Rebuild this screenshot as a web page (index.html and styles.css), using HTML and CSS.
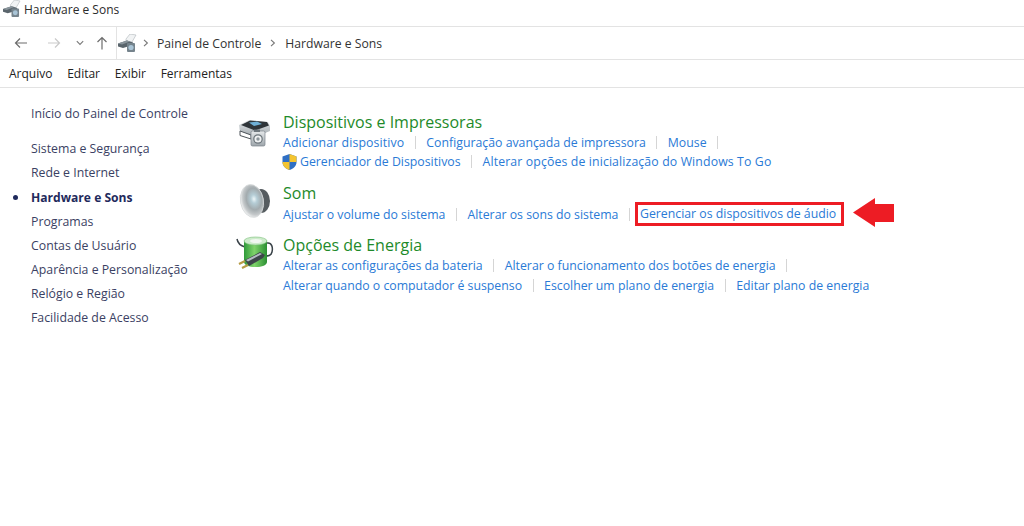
FILE: index.html
```html
<!DOCTYPE html>
<html lang="pt-BR">
<head>
<meta charset="utf-8">
<title>Hardware e Sons</title>
<link rel="stylesheet" href="styles.css">
</head>
<body>
<svg class="defs" width="0" height="0">
  <defs>
    <symbol id="hw" viewBox="0 0 20 18">
      <path d="M9 5 13 0 19 1 15 8 9 8Z" fill="#f1f3f4" stroke="#b9bfc3" stroke-width=".7"/>
      <path d="M1 9.500 10 6.500 16 8.500V11L6 14 1 12.500Z" fill="#5a656c"/>
      <path d="M1 9.500 10 6.500 13 7.500 5 10.500Z" fill="#8a959c"/>
      <rect x="10" y="9" width="8" height="9" rx="1" fill="#75838c"/>
      <circle cx="14" cy="13.500" r="2.600" fill="#a9c4d6"/>
    </symbol>
    <radialGradient id="cone" cx="0.6" cy="0.45" r="0.6">
      <stop offset="0" stop-color="#eef7f9"/>
      <stop offset="0.22" stop-color="#b5cdd6"/>
      <stop offset="0.55" stop-color="#a3abae"/>
      <stop offset="0.8" stop-color="#c4c8ca"/>
      <stop offset="1" stop-color="#f4f5f5"/>
    </radialGradient>
    <linearGradient id="bat" x1="0" x2="1">
      <stop offset="0" stop-color="#2f9a3a"/>
      <stop offset="0.45" stop-color="#7fd36a"/>
      <stop offset="1" stop-color="#2b8f33"/>
    </linearGradient>
    <linearGradient id="silver" x1="0" x2="0" y1="0" y2="1">
      <stop offset="0" stop-color="#e6e9eb"/>
      <stop offset="1" stop-color="#9ea6ab"/>
    </linearGradient>
  </defs>
</svg>
<header class="titlebar">
  <svg class="tb-icon"><use href="#hw"/></svg>
  <span>Hardware e Sons</span>
</header>
<nav class="addressrow">
  <div class="navbtns">
    <svg class="nav-back" width="14" height="12" viewBox="0 0 14 12"><path d="M13 6H1.500M6 1.500 1.500 6 6 10.500" fill="none" stroke="#6d6d6d" stroke-width="1.200"/></svg>
    <svg class="nav-fwd" width="14" height="12" viewBox="0 0 14 12"><path d="M1 6h11.500M8 1.500 12.500 6 8 10.500" fill="none" stroke="#c9c9c9" stroke-width="1.200"/></svg>
    <svg class="nav-down" width="8" height="6" viewBox="0 0 8 6"><path d="M.8 1.200 4 4.400 7.200 1.200" fill="none" stroke="#7a7a7a" stroke-width="1.100"/></svg>
    <svg class="nav-up" width="12" height="14" viewBox="0 0 12 14"><path d="M6 13.500V1.500M1.500 6 6 1.500 10.500 6" fill="none" stroke="#6d6d6d" stroke-width="1.200"/></svg>
  </div>
  <div class="addressbar">
    <svg class="ab-icon"><use href="#hw"/></svg>
    <svg class="chev" width="6" height="8" viewBox="0 0 6 8"><path d="M1 .8 4.400 4 1 7.200" fill="none" stroke="#777" stroke-width="1.100"/></svg>
    <span class="crumb">Painel de Controle</span>
    <svg class="chev chev2" width="6" height="8" viewBox="0 0 6 8"><path d="M1 .8 4.400 4 1 7.200" fill="none" stroke="#777" stroke-width="1.100"/></svg>
    <span class="crumb">Hardware e Sons</span>
  </div>
</nav>
<div class="menubar">
  <span>Arquivo</span><span>Editar</span><span>Exibir</span><span>Ferramentas</span>
</div>
<div class="content">
  <aside class="sidebar">
    <a class="side-home">Início do Painel de Controle</a>
    <a>Sistema e Segurança</a>
    <a>Rede e Internet</a>
    <a class="current">Hardware e Sons</a>
    <a>Programas</a>
    <a>Contas de Usuário</a>
    <a>Aparência e Personalização</a>
    <a>Relógio e Região</a>
    <a>Facilidade de Acesso</a>
  </aside>
  <main class="main">
    <section class="group g-devices">
      <svg class="gicon" width="34" height="34" viewBox="0 0 34 34">
        <path d="M2 8 12 3 31 5 33 9 33 14 18 20 3 15Z" fill="url(#silver)"/>
        <path d="M4 8 13 3.500 30 5 32 8.500 18 13.500Z" fill="#2f3539"/>
        <path d="M12 5.500 20 4.500 25 7 17 9Z" fill="#6fb0d6"/>
        <path d="M3 14 14 18V22L3 18.500Z" fill="#ffffff" stroke="#4c5358" stroke-width="1"/>
        <rect x="14" y="14" width="14" height="15" rx="1.500" fill="url(#silver)" stroke="#7a8389" stroke-width=".7"/>
        <rect x="17" y="12.500" width="6" height="2.500" fill="#6e777d"/>
        <circle cx="21" cy="22" r="4.200" fill="#f0f2f3" stroke="#6b747a" stroke-width="1.200"/>
        <circle cx="21" cy="22" r="1.700" fill="#8b959b"/>
      </svg>
      <div class="gbody">
        <h2>Dispositivos e Impressoras</h2>
        <div class="links"><a class="loose">Adicionar dispositivo</a><i></i><a>Configuração avançada de impressora</a><i></i><a>Mouse</a><i></i></div>
        <div class="links">
          <svg class="shield" width="17" height="18" viewBox="0 0 17 18"><path d="M8.500 1 15.500 3.500V9c0 4-3 6.700-7 8-4-1.300-7-4-7-8V3.500Z" fill="#2f6fc4"/><path d="M8.500 1 15.500 3.500V9H8.500Z" fill="#f4c430"/><path d="M8.500 9H1.500c0 4 3 6.700 7 8Z" fill="#f4c430"/></svg>
          <a>Gerenciador de Dispositivos</a><i></i><a class="loose">Alterar opções de inicialização do Windows To Go</a>
        </div>
      </div>
    </section>
    <section class="group g-sound">
      <svg class="gicon" width="34" height="36" viewBox="0 0 34 36">
        <ellipse cx="23" cy="17" rx="9" ry="12" fill="#565c60"/>
        <ellipse cx="14" cy="17" rx="11.500" ry="16.500" transform="rotate(-10 14 17)" fill="url(#cone)" stroke="#d5d8d9" stroke-width=".8"/>
      </svg>
      <div class="gbody">
        <h2>Som</h2>
        <div class="links"><a>Ajustar o volume do sistema</a><i></i><a>Alterar os sons do sistema</a><i></i><a class="marked">Gerenciar os dispositivos de áudio</a>
          <svg class="arrow" width="41" height="29" viewBox="0 0 41 29"><path d="M0 14.500 22 0V6H41V24H22V29Z" fill="#ed1c24"/></svg>
        </div>
      </div>
    </section>
    <section class="group g-power">
      <svg class="gicon" width="38" height="36" viewBox="0 0 38 36">
        <path d="M1 3C2 8 5 10 9 11M31 7c5-1 6 5 5 9s-4 4-7 4" fill="none" stroke="#3a4349" stroke-width="1.500"/>
        <path d="M8 4.500H31V26c0 3-5 5-11.500 5S8 29 8 26Z" fill="url(#bat)"/>
        <ellipse cx="19.500" cy="5" rx="11.500" ry="4" fill="#cdeccb" stroke="#7cbf7a" stroke-width=".6"/>
        <ellipse cx="20" cy="5" rx="6" ry="2" fill="#f1f7f0"/>
        <path d="M9 24 24 16 29 19 27 22 13 30Z" fill="#3d454a"/>
        <path d="M10 24 24 17 26 18 12 25.500Z" fill="#b4bcc1"/>
        <path d="M9 25 3 28M12 29 6 32" stroke="#b69b45" stroke-width="2.200"/>
      </svg>
      <div class="gbody">
        <h2>Opções de Energia</h2>
        <div class="links"><a>Alterar as configurações da bateria</a><i></i><a>Alterar o funcionamento dos botões de energia</a><i></i></div>
        <div class="links"><a>Alterar quando o computador é suspenso</a><i></i><a>Escolher um plano de energia</a><i></i><a>Editar plano de energia</a></div>
      </div>
    </section>
  </main>
</div>
</body>
</html>
```
FILE: styles.css
```css
* { box-sizing: border-box; }
html, body { margin: 0; padding: 0; background: #fff; }
body {
  width: 1024px;
  height: 526px;
  overflow: hidden;
  font-family: "Open Sans", "Noto Sans", sans-serif;
  font-size: 12px;
  color: #2b2b2b;
}
.defs { position: absolute; }
.titlebar {
  height: 27px;
  display: flex;
  align-items: flex-start;
  padding-left: 2px;
  border-bottom: 1px solid #e3e3e3;
  line-height: 19px;
}
.tb-icon { width: 19px; height: 17px; margin-right: 3px; }
.addressrow { height: 33px; display: flex; border-bottom: 1px solid #e3e3e3; }
.navbtns { width: 116px; display: flex; align-items: center; padding-left: 14px; }
.nav-fwd { margin-left: 19px; }
.nav-down { margin-left: 15px; }
.nav-up { margin-left: 12px; }
.addressbar {
  flex: 1;
  display: flex;
  align-items: center;
  border-left: 1px solid #e3e3e3;
  color: #333;
  font-size: 12.2px;
}
.ab-icon { width: 20px; height: 18px; }
.chev { margin: 0 8px 0 6px; }
.crumb { margin-right: 0; }
.chev2 { margin: 0 9px 0 9px; }
.menubar {
  height: 28px;
  display: flex;
  gap: 14.7px;
  align-items: center;
  padding-left: 9px;
  border-bottom: 1px solid #e3e3e3;
  color: #222;
}
.content { display: flex; padding-top: 16px; }
.sidebar {
  width: 224px;
  padding-left: 31px;
  display: flex;
  flex-direction: column;
  color: #3b3f63;
  font-size: 12.3px;
}
.sidebar a { height: 24px; line-height: 20px; white-space: nowrap; }
.sidebar .side-home { height: 35px; }
.sidebar .current { font-weight: 700; font-size: 12.1px; color: #1f2a5c; position: relative; margin-top: 1px; }
.current::before {
  content: "";
  position: absolute;
  left: -18px;
  top: 7px;
  width: 5px;
  height: 5px;
  border-radius: 50%;
  background: #1f2a5c;
}
.main { flex: 1; display: flex; flex-direction: column; }
.group { display: flex; }
.gicon { flex: none; }
.g-devices { height: 70px; margin-top: 8px; }
.g-devices .gicon { margin: 5px 0 0 13px; }
.g-devices .gbody { margin-left: 12px; }
.g-devices .links { height: 19px; }
.g-sound { height: 52px; }
.g-sound .gicon { margin: 2px 0 0 14px; }
.g-sound .gbody { margin-left: 11px; }
.g-sound h2 { margin-bottom: 1px; }
.g-power .gicon { margin: 2px 0 0 12px; }
.g-power .gbody { margin-left: 9px; }
h2 {
  margin: 0;
  font-size: 16px;
  font-weight: 400;
  line-height: 21px;
  color: #1e8a2a;
}
.g-sound h2, .g-power h2 { padding-top: 2px; line-height: 19px; }
.links {
  display: flex;
  align-items: center;
  height: 20px;
  white-space: nowrap;
  font-size: 12.3px;
  color: #2a7ad6;
}
.links i {
  width: 1px;
  height: 13px;
  margin: 0 10.5px;
  background: #d5d5d5;
}
.loose { letter-spacing: 0.12px; }
.shield { margin-left: -2px; margin-right: 2px; }
.marked {
  border: 3.5px solid #ed1c24;
  padding: 0 5px 0 2px;
  height: 24px;
  line-height: 17px;
  margin: 0 0 0 -5.500px;
}
.arrow { margin: 0 0 3px 9px; height: 29px; }
```
